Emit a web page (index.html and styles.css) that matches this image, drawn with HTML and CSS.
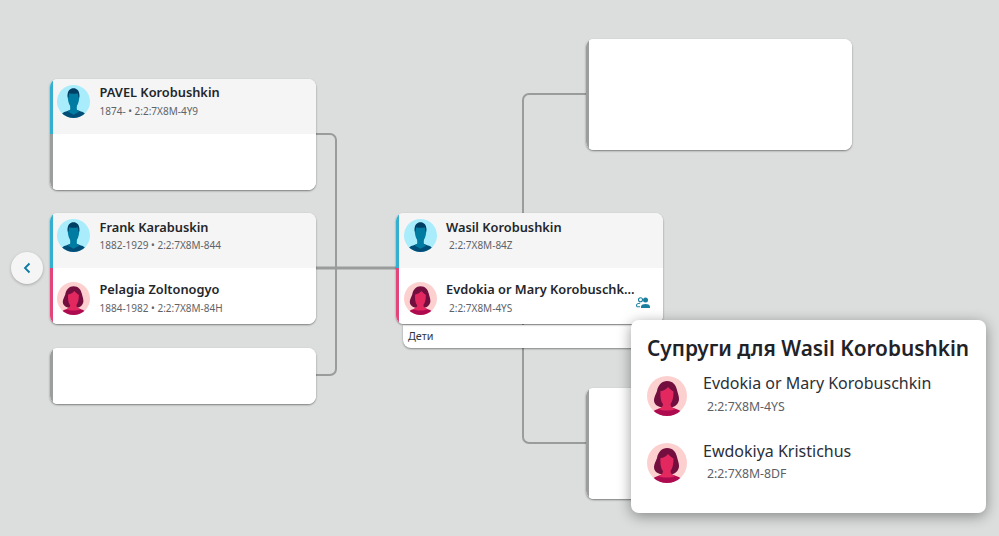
FILE: index.html
```html
<!DOCTYPE html>
<html lang="ru">
<head>
<meta charset="utf-8">
<title>Pedigree</title>
<link rel="stylesheet" href="styles.css">
</head>
<body>
<svg class="defs" width="0" height="0" aria-hidden="true">
  <symbol id="male" viewBox="0 0 40 40">
    <circle cx="20" cy="20" r="20" fill="#a9ecfb"/>
    <clipPath id="cm"><circle cx="20" cy="20" r="20"/></clipPath>
    <g clip-path="url(#cm)">
      <path d="M5 40c0-5 2-7 6-8l5-2h8l5 2c4 1 6 3 6 8z" fill="#004e78"/>
      <path d="M16 24h8v6l3 2-7 4-7-4 3-2z" fill="#007ca3"/>
      <path d="M13 13c0-4 3-7 7-7s7 3 7 7c0 7-2 11-3.500 13-2 2-5 2-7 0-1.500-2-3.500-6-3.500-13z" fill="#007ca3"/>
      <path d="M13 15c-1-8 3-11 7-11s8 3 7 11l-1 0c0-2-.5-4-1-5-3 1-7 1-10 0-.5 1-1 3-1 5z" fill="#003f63"/>
    </g>
  </symbol>
  <symbol id="female" viewBox="0 0 40 40">
    <circle cx="20" cy="20" r="20" fill="#fdd0d0"/>
    <clipPath id="cf"><circle cx="20" cy="20" r="20"/></clipPath>
    <g clip-path="url(#cf)">
      <path d="M20 5c6 0 9 4 10 9 1 4 2 6 2 9 0 4-3 7-6 8-4 1-10 1-13 0-3-1-6-3-6-7 0-3 2-6 3-9 1-6 5-10 10-10z" fill="#720f3f"/>
      <path d="M5 40c0-4 2-6 6-7l5-2h8l5 2c4 1 6 3 6 7z" fill="#ad0a50"/>
      <path d="M11 33c3-1 5-2 5-5-2-2-3-7-2.500-13 3 0 6-2 7.500-4 2 2 4 4 5.500 4.500 0 6-1 10-3 12.500 0 3 2 4 5 5-4 2-13 2-17 0z" fill="#e2285f"/>
    </g>
  </symbol>
</svg>

<main class="canvas">
  <svg class="links" width="999" height="536" aria-hidden="true">
    <path d="M316 134H330a6 6 0 0 1 6 6V369a6 6 0 0 1-6 6H316"/>
    <path class="trunk" d="M316 268H398"/>
    <path d="M586 94H529a6 6 0 0 0-6 6V437a6 6 0 0 0 6 6H586"/>
  </svg>

  <button class="back" type="button" aria-label="Назад">
    <svg width="10" height="12" viewBox="0 0 10 12"><path d="M7.500 1.500 3 6l4.500 4.500" fill="none" stroke="#0a7aa3" stroke-width="1.800"/></svg>
  </button>

  <section class="card pos-pavel">
    <div class="person father shaded">
      <svg class="avatar"><use href="#male"/></svg>
      <div class="info"><div class="name">PAVEL Korobushkin</div><div class="meta">1874- • 2:2:7X8M-4Y9</div></div>
    </div>
    <div class="person empty"></div>
  </section>

  <section class="card pos-frank">
    <div class="person father shaded">
      <svg class="avatar"><use href="#male"/></svg>
      <div class="info"><div class="name">Frank Karabuskin</div><div class="meta">1882-1929 • 2:2:7X8M-844</div></div>
    </div>
    <div class="person mother">
      <svg class="avatar"><use href="#female"/></svg>
      <div class="info"><div class="name">Pelagia Zoltonogyo</div><div class="meta">1884-1982 • 2:2:7X8M-84H</div></div>
    </div>
  </section>

  <section class="card pos-third"><div class="person empty"></div></section>

  <div class="children pos-children">Дети</div>

  <section class="card pos-wasil">
    <div class="person father shaded">
      <svg class="avatar"><use href="#male"/></svg>
      <div class="info wide"><div class="name">Wasil Korobushkin</div><div class="meta pid">2:2:7X8M-84Z</div></div>
    </div>
    <div class="person mother">
      <svg class="avatar"><use href="#female"/></svg>
      <div class="info wide"><div class="name">Evdokia or Mary Korobuschk...</div><div class="meta pid">2:2:7X8M-4YS</div></div>
      <svg class="spouses" width="14" height="11" viewBox="0 0 14 11"><g fill="#1a7f9f"><circle cx="9.500" cy="3" r="2.500"/><path d="M5 11V9.500C5 7.800 7.500 7 9.500 7s4.500.8 4.500 2.500V11z"/></g><g fill="none" stroke="#1a7f9f" stroke-width="1.100"><circle cx="4.500" cy="2.800" r="2"/><path d="M.6 9.500V8.300C.6 7 2.500 6.300 4.200 6.300"/><path d="M.6 9.700H4"/></g></svg>
    </div>
  </section>

  <section class="card pos-top"><div class="person empty tall"></div></section>
  <section class="card pos-bottom"><div class="person empty tall"></div></section>

  <aside class="popup">
    <h2 class="popup-title">Супруги для Wasil Korobushkin</h2>
    <div class="spouse">
      <svg class="avatar-lg"><use href="#female"/></svg>
      <div class="spouse-info"><div class="spouse-name">Evdokia or Mary Korobuschkin</div><div class="spouse-id">2:2:7X8M-4YS</div></div>
    </div>
    <div class="spouse">
      <svg class="avatar-lg"><use href="#female"/></svg>
      <div class="spouse-info"><div class="spouse-name">Ewdokiya Kristichus</div><div class="spouse-id">2:2:7X8M-8DF</div></div>
    </div>
  </aside>
</main>
</body>
</html>
```
FILE: styles.css
```css
* { box-sizing: border-box; }
html, body { margin: 0; height: 100%; overflow: hidden; }
body { background: #dcdedd; font-family: "Noto Sans", "Open Sans", sans-serif; color: #1f2328; }
.defs { position: absolute; }
.canvas { position: relative; width: 999px; height: 536px; overflow: hidden; }
.links { position: absolute; left: 0; top: 0; }
.links path { fill: none; stroke: #9a9b9b; stroke-width: 2; }
.links .trunk { stroke-width: 3; }

.back {
  position: absolute; left: 11px; top: 252px; width: 32px; height: 32px; padding: 0;
  border: 0; border-radius: 50%; background: #f5f5f5;
  box-shadow: 0 1px 3px rgba(0,0,0,.25);
  display: flex; align-items: center; justify-content: center;
}

.card {
  position: absolute; width: 266px; border-radius: 8px; overflow: hidden;
  background: #fff; box-shadow: 0 1px 2px rgba(0,0,0,.45);
  display: flex; flex-direction: column;
}
.pos-pavel { left: 50px; top: 79px; }
.pos-frank { left: 50px; top: 213px; }
.pos-third { left: 50px; top: 348px; }
.pos-wasil { left: 396px; top: 213px; width: 267px; }
.pos-top { left: 586px; top: 39px; }
.pos-bottom { left: 586px; top: 388px; }

.person {
  position: relative; height: 55px; display: flex; align-items: flex-start;
  padding: 6px 0 0 4px; border-left: 3px solid #9c9d9d; background: #fff;
}
.person + .person { height: 56px; }
.pos-third .person { height: 56px; }
.person.tall { height: 111px; }
.father { border-left-color: #35afcf; }
.mother { border-left-color: #e2457a; padding-top: 14px; }
.shaded { background: #f5f5f5; }
.pos-wasil .person { padding-left: 5px; }

.avatar { width: 33px; height: 33px; flex: none; }
.avatar-lg { width: 40px; height: 40px; flex: none; }
.info { margin-left: 9.500px; margin-top: -1px; min-width: 0; }
.info.wide { margin-left: 9px; }
.mother .info { margin-top: -2px; }
.name { font-size: 12.800px; font-weight: 600; line-height: 18px; white-space: nowrap; color: #22262b; }
.meta { font-size: 10px; line-height: 14px; margin-top: 2px; color: #5f6368; white-space: nowrap; }
.mother .meta { margin-top: 3px; }
.meta.pid { padding-left: 3px; }
.father .meta.pid { margin-top: 2px; }
.pos-pavel .info { margin-top: -2px; }
.pos-pavel .meta { margin-top: 3px; }
.spouses { position: absolute; right: 13px; top: 29px; }

.children {
  position: absolute; left: 403px; top: 325px; width: 250px; height: 23px;
  padding-left: 5px; background: #fff; border-radius: 0 0 8px 8px;
  box-shadow: 0 1px 2px rgba(0,0,0,.4);
  font-size: 10.800px; line-height: 22px; color: #33373b;
}

.popup {
  position: absolute; left: 631px; top: 320px; width: 355px; height: 193px;
  padding: 13px 16px 0; background: #fff; border-radius: 8px;
  box-shadow: 0 3px 14px rgba(0,0,0,.4);
}
.popup-title { margin: 0 0 13px; font-size: 20.800px; line-height: 30px; font-weight: 600; color: #1f2328; white-space: nowrap; }
.spouse { display: flex; align-items: flex-start; height: 67px; }
.spouse-info { margin-left: 16px; margin-top: -4px; }
.spouse + .spouse .spouse-info { margin-top: -3px; }
.spouse-name { font-size: 16px; line-height: 22px; color: #2b2f38; white-space: nowrap; }
.spouse-id { font-size: 12.300px; line-height: 16px; margin-top: 5px; padding-left: 4px; color: #5c6066; }
.spouse + .spouse .spouse-id { margin-top: 4px; }
```
